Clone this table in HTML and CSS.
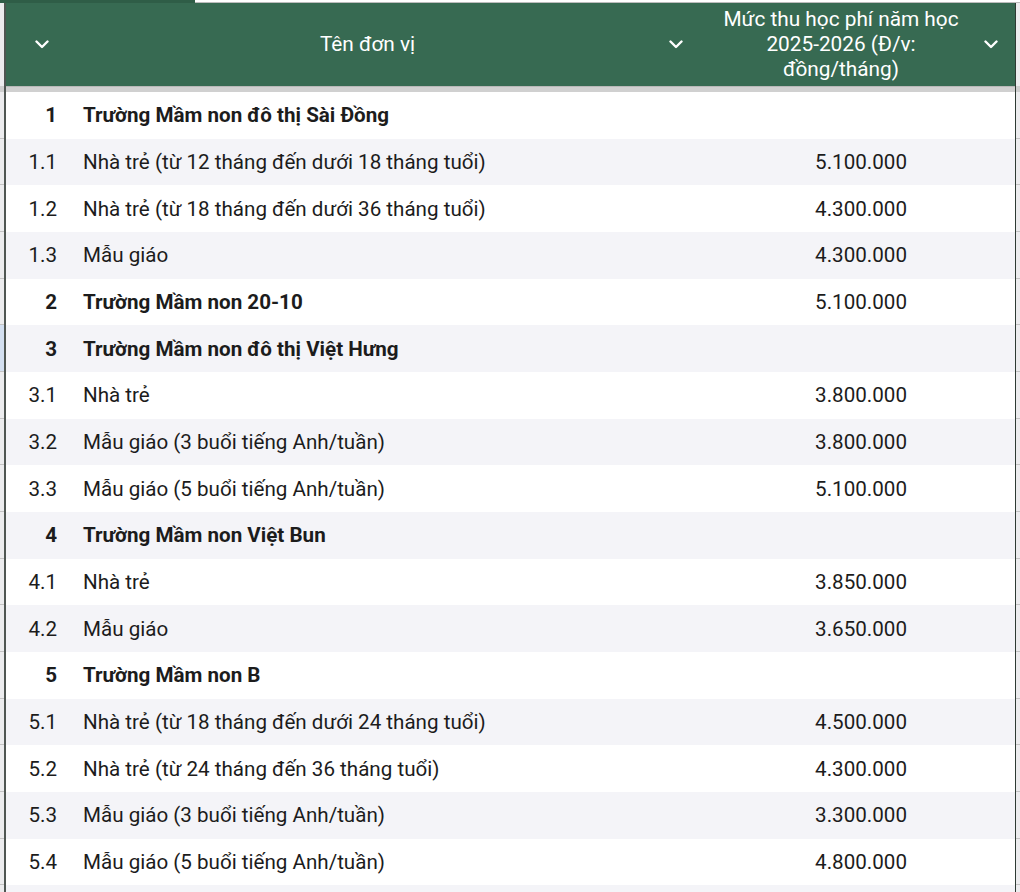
FILE: index.html
```html
<!DOCTYPE html>
<html lang="vi">
<head>
<meta charset="utf-8">
<link rel="stylesheet" href="styles.css">
</head>
<body>
<div class="topstrip"><div class="tab"></div><div class="rest"></div></div>
<div class="sheet">
  <div class="gutter left">
    <div class="ghead"></div>
    <div class="gdiv"></div>
    <div class="gcell"></div><div class="gcell"></div><div class="gcell"></div><div class="gcell"></div><div class="gcell"></div>
    <div class="gcell sel"></div>
    <div class="gcell"></div><div class="gcell"></div><div class="gcell"></div><div class="gcell"></div><div class="gcell"></div><div class="gcell"></div><div class="gcell"></div><div class="gcell"></div><div class="gcell"></div><div class="gcell"></div><div class="gcell"></div><div class="gcell"></div>
  </div>
  <div class="table">
    <div class="head">
      <div class="hcell c1"><span class="htext"></span><svg class="chev" viewBox="0 0 14 9"><path d="M1.5 1.5 L7 7 L12.5 1.5"/></svg></div>
      <div class="hcell c2"><span class="htext">Tên đơn vị</span><svg class="chev" viewBox="0 0 14 9"><path d="M1.5 1.5 L7 7 L12.5 1.5"/></svg></div>
      <div class="hcell c3"><span class="htext">Mức thu học phí năm học 2025-2026 (Đ/v: đồng/tháng)</span><svg class="chev" viewBox="0 0 14 9"><path d="M1.5 1.5 L7 7 L12.5 1.5"/></svg></div>
    </div>
    <div class="divider"></div>
    <div class="body">
      <div class="row b"><div class="num">1</div><div class="name">Trường Mầm non đô thị Sài Đồng</div><div class="val"></div></div>
      <div class="row alt"><div class="num">1.1</div><div class="name">Nhà trẻ (từ 12 tháng đến dưới 18 tháng tuổi)</div><div class="val">5.100.000</div></div>
      <div class="row"><div class="num">1.2</div><div class="name">Nhà trẻ (từ 18 tháng đến dưới 36 tháng tuổi)</div><div class="val">4.300.000</div></div>
      <div class="row alt"><div class="num">1.3</div><div class="name">Mẫu giáo</div><div class="val">4.300.000</div></div>
      <div class="row b"><div class="num">2</div><div class="name">Trường Mầm non 20-10</div><div class="val">5.100.000</div></div>
      <div class="row b alt"><div class="num">3</div><div class="name">Trường Mầm non đô thị Việt Hưng</div><div class="val"></div></div>
      <div class="row"><div class="num">3.1</div><div class="name">Nhà trẻ</div><div class="val">3.800.000</div></div>
      <div class="row alt"><div class="num">3.2</div><div class="name">Mẫu giáo (3 buổi tiếng Anh/tuần)</div><div class="val">3.800.000</div></div>
      <div class="row"><div class="num">3.3</div><div class="name">Mẫu giáo (5 buổi tiếng Anh/tuần)</div><div class="val">5.100.000</div></div>
      <div class="row b alt"><div class="num">4</div><div class="name">Trường Mầm non Việt Bun</div><div class="val"></div></div>
      <div class="row"><div class="num">4.1</div><div class="name">Nhà trẻ</div><div class="val">3.850.000</div></div>
      <div class="row alt"><div class="num">4.2</div><div class="name">Mẫu giáo</div><div class="val">3.650.000</div></div>
      <div class="row b"><div class="num">5</div><div class="name">Trường Mầm non B</div><div class="val"></div></div>
      <div class="row alt"><div class="num">5.1</div><div class="name">Nhà trẻ (từ 18 tháng đến dưới 24 tháng tuổi)</div><div class="val">4.500.000</div></div>
      <div class="row"><div class="num">5.2</div><div class="name">Nhà trẻ (từ 24 tháng đến 36 tháng tuổi)</div><div class="val">4.300.000</div></div>
      <div class="row alt"><div class="num">5.3</div><div class="name">Mẫu giáo (3 buổi tiếng Anh/tuần)</div><div class="val">3.300.000</div></div>
      <div class="row"><div class="num">5.4</div><div class="name">Mẫu giáo (5 buổi tiếng Anh/tuần)</div><div class="val">4.800.000</div></div>
      <div class="row alt"><div class="num"></div><div class="name"></div><div class="val"></div></div>
    </div>
  </div>
  <div class="gutter right">
    <div class="ghead"></div>
    <div class="gdiv"></div>
    <div class="gcell"></div><div class="gcell"></div><div class="gcell"></div><div class="gcell"></div><div class="gcell"></div><div class="gcell"></div><div class="gcell"></div><div class="gcell"></div><div class="gcell"></div><div class="gcell"></div><div class="gcell"></div><div class="gcell"></div><div class="gcell"></div><div class="gcell"></div><div class="gcell"></div><div class="gcell"></div><div class="gcell"></div><div class="gcell"></div>
  </div>
</div>
</body>
</html>
```
FILE: styles.css
```css
html, body {
  margin: 0;
  padding: 0;
  background: #ffffff;
  overflow: hidden;
}
body {
  width: 1020px;
  height: 892px;
  font-family: Roboto, "Noto Sans", "Liberation Sans", sans-serif;
  color: #1c1c1c;
}
.topstrip {
  display: flex;
  height: 3px;
}
.topstrip .tab {
  width: 195px;
  background: #2f5d47;
}
.topstrip .rest {
  flex: 1;
  background: #ffffff;
  border-bottom: 1px solid #bdbdbd;
  box-sizing: border-box;
}
.sheet {
  display: flex;
  height: 889px;
  overflow: hidden;
}
.gutter {
  display: flex;
  flex-direction: column;
  background: #ececee;
  overflow: hidden;
}
.gutter.left {
  width: 4px;
  border-right: 2px solid #4f5652;
}
.gutter.right {
  width: 4px;
  border-left: 1px solid #2e3a33;
}
.ghead {
  height: 83px;
  flex: none;
}
.gdiv {
  height: 6px;
  flex: none;
  background: #cfcfcf;
}
.gcell {
  height: 46.67px;
  flex: none;
  box-sizing: border-box;
  border-bottom: 1px solid #c4c4c4;
}
.gcell.sel {
  background: #d3dff0;
}
.table {
  width: 1009px;
  display: flex;
  flex-direction: column;
  overflow: hidden;
}
.head {
  flex: none;
  display: grid;
  grid-template-columns: 60px 634px 1fr;
  height: 83px;
  background: #376a52;
  color: #ffffff;
  font-size: 20.8px;
  line-height: 25px;
}
.hcell {
  display: flex;
  align-items: center;
  padding-right: 17px;
}
.htext {
  flex: 1;
  text-align: center;
  padding: 0 6px;
}
.c3 .htext {
  padding: 0 14px 0 12px;
}
.chev {
  width: 14px;
  height: 9px;
  flex: none;
  fill: none;
  stroke: #ffffff;
  stroke-width: 2.4;
  stroke-linecap: round;
  stroke-linejoin: round;
}
.divider {
  flex: none;
  height: 6px;
  background: #d0d0d0;
  border-top: 1px solid #b8b8b8;
  box-sizing: border-box;
}
.body {
  flex: none;
  display: flex;
  flex-direction: column;
}
.row {
  flex: none;
  display: grid;
  grid-template-columns: 60px 634px 1fr;
  height: 46.67px;
  align-items: center;
  font-size: 20.6px;
  background: #ffffff;
}
.row.alt {
  background: #f4f4f8;
}
.row.b .num,
.row.b .name {
  font-weight: 700;
}
.num {
  text-align: right;
  padding-right: 9px;
}
.name {
  padding-left: 17px;
  white-space: nowrap;
}
.val {
  text-align: right;
  padding-right: 108px;
}
```
